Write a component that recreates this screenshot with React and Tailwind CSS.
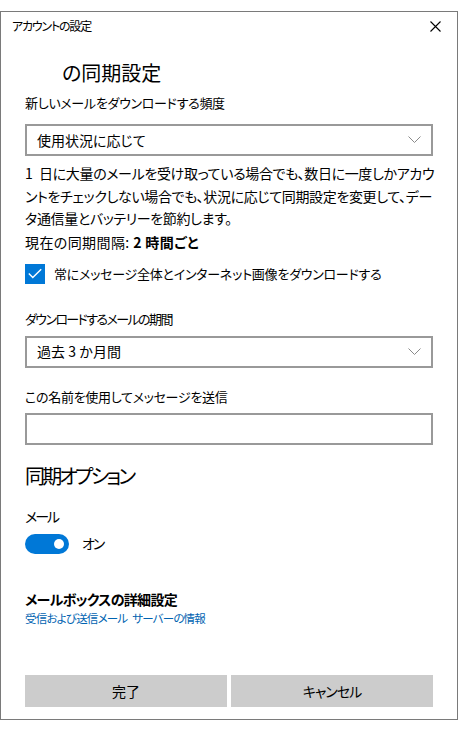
import React from "react";

const jp = "font-['Segoe_UI','Noto_Sans_CJK_JP',sans-serif] [font-feature-settings:'palt']";

const Chevron = () => (
    <svg width="13" height="8" viewBox="0 0 13 8" fill="none">
        <path d="M0.5 0.5L6.5 6.5L12.5 0.5" stroke="#8a8a8a" strokeWidth="1" />
    </svg>
);

const Dropdown = ({ value, className, textClass = "" }) => (
    <div className={`flex items-center justify-between h-[32px] border-2 border-[#999999] pl-[10px] pr-[10px] text-[14px] ${className}`}>
        <span className={`whitespace-pre ${textClass}`}>{value}</span>
        <Chevron />
    </div>
);

export default function App() {
    return (
        <div className={`bg-white min-h-[735px] pt-[11px] ${jp} text-black`}>
            <div className="flex flex-col h-[709px] border border-[#7a7a7a]">
                {/* title bar */}
                <div className="flex items-center justify-between h-[28px] pl-[11px] pr-[16px]">
                    <span className="text-[12px] tracking-[-1.2px]">アカウントの設定</span>
                    <svg width="11" height="11" viewBox="0 0 11 11">
                        <path d="M0.5 0.5L10.5 10.5M10.5 0.5L0.5 10.5" stroke="#000" strokeWidth="1.1" />
                    </svg>
                </div>

                <div className="flex flex-col flex-1 px-[24px]">
                    <h1 className="mt-[19px] ml-[37px] text-[20px] leading-[28px] font-normal">の同期設定</h1>

                    <p className="mt-[6px] text-[13px] leading-[20px] tracking-[-0.3px]">新しいメールをダウンロードする頻度</p>
                    <Dropdown value="使用状況に応じて" className="mt-[11px]" />

                    <p className="mt-[6px] text-[14px] leading-[22.5px] tracking-[-0.35px] whitespace-nowrap">
                        1{"\u2002"}日に大量のメールを受け取っている場合でも、数日に一度しかアカウ
                        <br />
                        ントをチェックしない場合でも、状況に応じて同期設定を変更して、デー
                        <br />
                        タ通信量とバッテリーを節約します。
                    </p>
                    <p className="mt-[2px] text-[14px] leading-[20px] tracking-[0.4px]">
                        現在の同期間隔: <span className="font-bold">2 時間ごと</span>
                    </p>

                    <div className="mt-[12px] flex items-center gap-[9px] h-[20px]">
                        <div className="w-[20px] h-[20px] bg-[#0078d7] flex items-center justify-center">
                            <svg width="14" height="11" viewBox="0 0 14 11" fill="none">
                                <path d="M0.8 5.6L4.8 9.6L13.2 1.2" stroke="#fff" strokeWidth="1.4" />
                            </svg>
                        </div>
                        <span className="text-[13px] tracking-[-0.25px]">常にメッセージ全体とインターネット画像をダウンロードする</span>
                    </div>

                    <p className="mt-[25px] text-[13px] leading-[20px] tracking-[-1.6px]">ダウンロードするメールの期間</p>
                    <Dropdown value="過去 3 か月間" className="mt-[7px]" textClass="[font-feature-settings:normal]" />

                    <p className="mt-[19px] text-[13px] leading-[20px] tracking-[-0.3px]">この名前を使用してメッセージを送信</p>
                    <div className="mt-[6px] h-[32px] border-2 border-[#999999]" />

                    <h2 className="mt-[17px] text-[20px] leading-[28px] font-normal tracking-[-2.8px]">同期オプション</h2>

                    <p className="mt-[16px] text-[14px] leading-[20px] tracking-[-2px]">メール</p>
                    <div className="mt-[8px] flex items-center gap-[13px] h-[20px]">
                        <div className="w-[44px] h-[20px] rounded-full bg-[#0078d7] flex items-center justify-end pr-[5px]">
                            <div className="w-[10px] h-[10px] rounded-full bg-white" />
                        </div>
                        <span className="text-[14px] tracking-[-2px]">オン</span>
                    </div>

                    <p className="mt-[35px] text-[14px] leading-[20px] font-bold tracking-[-0.7px]">メールボックスの詳細設定</p>
                    <p className="text-[11.5px] leading-[18px] tracking-[-0.8px] text-[#0063b1]">
                        受信および送信メール{"\u2002"}サーバーの情報
                    </p>

                    <div className="flex-1" />

                    <div className="mb-[12px] grid grid-cols-2 gap-[4px]">
                        <button className="h-[32px] bg-[#cccccc] text-[14px]">完了</button>
                        <button className="h-[32px] bg-[#cccccc] text-[14px] tracking-[-1px]">キャンセル</button>
                    </div>
                </div>
            </div>
        </div>
    );
}
